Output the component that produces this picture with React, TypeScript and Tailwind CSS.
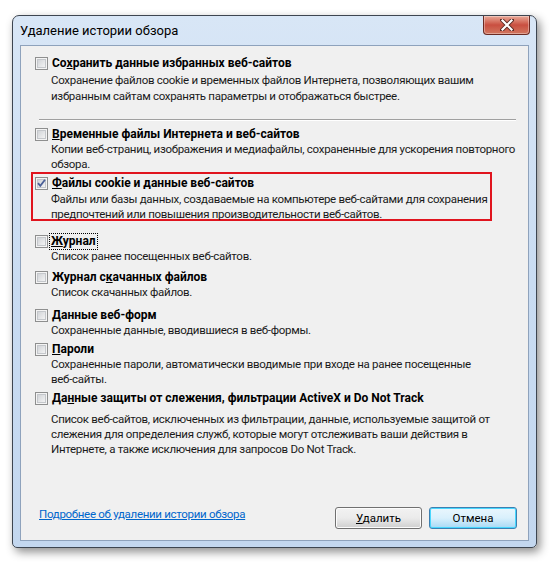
import React from "react";

function Check({ checked = false }: { checked?: boolean }) {
  return (
    <svg width="13" height="13" viewBox="0 0 13 13" className="shrink-0 block">
      <defs>
        <linearGradient id="cbg" x1="0" y1="0" x2="1" y2="1">
          <stop offset="0" stopColor="#cdd0d4" />
          <stop offset="1" stopColor="#f7f7f7" />
        </linearGradient>
      </defs>
      <rect x="0.5" y="0.5" width="12" height="12" fill="#f4f4f4" stroke="#8e8f8f" />
      <rect x="2" y="2" width="9" height="9" fill="url(#cbg)" stroke="none" />
      <rect x="2.5" y="2.5" width="8" height="8" fill="none" stroke="#c4c7cb" strokeWidth="1" />
      {checked && (
        <path d="M3 6.2 L5.3 8.8 L10 2.8" fill="none" stroke="#4a5f97" strokeWidth="1.8" strokeLinejoin="miter" />
      )}
    </svg>
  );
}

function Section({
  heading,
  desc,
  checked,
  focus,
  className = "",
  descClass = "",
}: {
  heading: React.ReactNode;
  desc: React.ReactNode;
  checked?: boolean;
  focus?: boolean;
  className?: string;
  descClass?: string;
}) {
  return (
    <div className={"flex flex-col " + className}>
      <div className="flex items-center h-[16px]">
        <Check checked={checked} />
        <span
          className={
            "ml-[2px] font-bold text-black leading-[15px] px-[1px] whitespace-nowrap " +
            (focus ? "outline outline-1 outline-dotted outline-black" : "border border-transparent")
          }
        >
          {heading}
        </span>
      </div>
      <div className={"ml-[16px] leading-[15px] text-[11.5px] tracking-[-0.3px] text-[#1a1a1a] whitespace-nowrap " + descClass}>{desc}</div>
    </div>
  );
}

export default function App() {
  return (
    <div className="w-[553px] h-[562px] bg-white overflow-hidden font-['Roboto','Noto_Sans',sans-serif] text-[12px]">
      <div className="ml-[12px] mt-[15px] w-[525px] h-[533px] rounded-t-[7px] rounded-b-[5px] border border-[#3d4550] bg-gradient-to-b from-[#d8e6f6] via-[#c9dcf2] to-[#c3d7ef] shadow-[3px_4px_10px_rgba(0,0,0,0.45)] flex flex-col">
        <div className="h-[29px] shrink-0 flex items-start justify-between pl-[7px] pr-[6px]">
          <span className="mt-[7px] text-[13px] text-black leading-[16px]">Удаление истории обзора</span>
          <div className="w-[47px] h-[19px] rounded-b-[4px] border border-t-0 border-[#6b2a22] bg-gradient-to-b from-[#e8a898] via-[#c94f40] to-[#d1765f] flex items-center justify-center shadow-[inset_0_0_0_1px_rgba(255,255,255,0.35)]">
            <svg width="14" height="12" viewBox="0 0 14 12">
              <path d="M2 1 L12 11 M12 1 L2 11" stroke="#5a2a24" strokeWidth="4" strokeLinecap="square" />
              <path d="M2.5 1.5 L11.5 10.5 M11.5 1.5 L2.5 10.5" stroke="#ffffff" strokeWidth="2.2" strokeLinecap="square" />
            </svg>
          </div>
        </div>
        <div className="mx-[7px] mb-[6px] h-[497px] border border-[#8ea2bc] bg-[#f0f0f0] flex flex-col pl-[14px] pr-[11px] pt-[9px] pb-[11px]">
          <Section
            heading={<>Со<u>х</u>ранить данные избранных веб-сайтов</>}
            desc={<>Сохранение файлов cookie и временных файлов Интернета, позволяющих вашим<br />избранным сайтам сохранять параметры и отображаться быстрее.</>}
            descClass="leading-[16px] mt-[1px]"
          />
          <div className="mt-[15px] ml-[4px] mr-[1px] h-px bg-[#a0a0a0] border-b border-white box-content" />
          <Section
            className="mt-[5px]"
            heading={<><u>В</u>ременные файлы Интернета и веб-сайтов</>}
            desc={<>Копии веб-страниц, изображения и медиафайлы, сохраненные для ускорения повторного<br />обзора.</>}
          />
          <div className="mt-0 -ml-[4px] w-[461px] h-[49px] shrink-0 border-2 border-[#e0141e] pl-[2px] pt-[1px] pb-0">
            <Section
              checked
              heading={<><u>Ф</u>айлы cookie и данные веб-сайтов</>}
              desc={<>Файлы или базы данных, создаваемые на компьютере веб-сайтами для сохранения<br />предпочтений или повышения производительности веб-сайтов.</>}
              descClass="leading-[14px] mt-[1px]"
            />
          </div>
          <Section
            className="mt-[12px]"
            focus
            heading={<><u>Ж</u>урнал</>}
            desc={<>Список ранее посещенных веб-сайтов.</>}
          />
          <Section
            className="mt-[5px]"
            heading={<>Журнал с<u>к</u>ачанных файлов</>}
            desc={<>Список скачанных файлов.</>}
          />
          <Section
            className="mt-[7px]"
            heading={<><u>Д</u>анные веб-форм</>}
            desc={<>Сохраненные данные, вводившиеся в веб-формы.</>}
          />
          <Section
            className="mt-[3px]"
            heading={<><u>П</u>ароли</>}
            desc={<>Сохраненные пароли, автоматически вводимые при входе на ранее посещенные<br />веб-сайты.</>}
          />
          <Section
            className="mt-[3px]"
            heading={<>Да<u>н</u>ные защиты от слежения, фильтрации ActiveX и Do Not Track</>}
            descClass="mt-[6px]"
            desc={<>Список веб-сайтов, исключенных из фильтрации, данные, используемые защитой от<br />слежения для определения служб, которые могут отслеживать ваши действия в<br />Интернете, а также исключения для запросов Do Not Track.</>}
          />
          <div className="mt-auto flex items-end justify-between">
            <a className="ml-[4px] mb-[7px] text-[11.5px] tracking-[-0.3px] text-[#0066cc] underline leading-[15px] cursor-pointer">Подробнее об удалении истории обзора</a>
            <div className="flex gap-[7px]">
              <button className="w-[87px] h-[22px] rounded-[3px] border border-[#707070] bg-gradient-to-b from-[#f2f2f2] via-[#ebebeb] to-[#cfcfcf] text-black text-[11.5px] leading-[18px] shadow-[inset_0_0_0_1px_#fcfcfc]">
                <u>У</u>далить
              </button>
              <button className="w-[88px] h-[22px] rounded-[3px] border border-[#3c7fb1] bg-gradient-to-b from-[#eaf6fd] via-[#d9f0fc] to-[#a7d9f5] text-black text-[11.5px] leading-[18px] shadow-[inset_0_0_0_1px_#48d7fe]">
                Отмена
              </button>
            </div>
          </div>
        </div>
      </div>
    </div>
  );
}
